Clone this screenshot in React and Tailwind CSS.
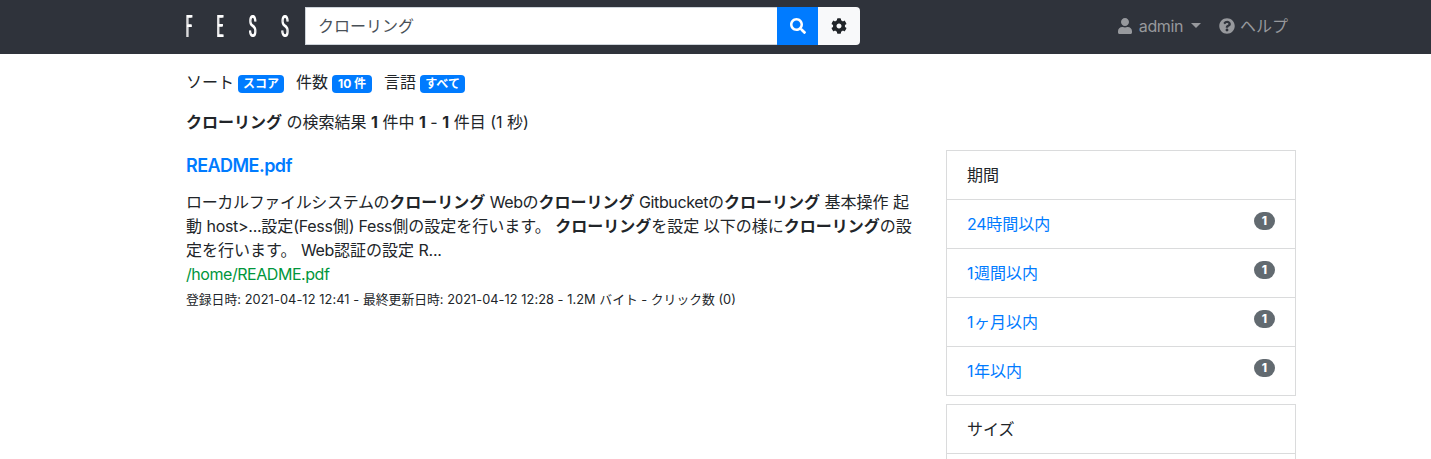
import { FaSearch, FaCog, FaUser, FaQuestionCircle } from "react-icons/fa";

function L({ children, className = "tracking-[-0.3px]" }) {
  return <span className={className}>{children}</span>;
}

// The sideways drop shadow thickens the upright strokes of the narrow wordmark.
function Logo() {
  return (
    <svg className="h-[52px] w-[119px] shrink-0 overflow-visible drop-shadow-[1px_0_0_#fff]" viewBox="0 0 119 52" fill="#fff" fontFamily="Roboto, sans-serif" fontSize="31" fontWeight="400">
      <text transform="translate(-0.6 37) scale(.36 1)">F</text>
      <text transform="translate(30.2 37) scale(.38 1)">E</text>
      <text transform="translate(62.5 37) scale(.4 1)">S</text>
      <text transform="translate(94.8 37) scale(.4 1)">S</text>
    </svg>
  );
}

function Header() {
  return (
    <header className="h-[54px] bg-[#2f333b]">
      <div className="ml-[186px] flex h-[52px] w-[1110px] items-center">
        <Logo />
        <div className="flex h-[38px]">
          <div className="flex w-[472px] items-center border border-r-0 border-[#ced4da] bg-white pl-3 text-[#495057]">
            クローリング
          </div>
          <button className="flex w-[41px] items-center justify-center bg-[#007bff] text-white">
            <FaSearch size={16} />
          </button>
          <button className="flex w-[42px] items-center justify-center rounded-r bg-[#f8f9fa] text-[#212529]">
            <FaCog size={16} />
          </button>
        </div>
        <nav className="ml-auto flex items-center gap-[18px] pr-2 text-[#97999d]">
          <a className="flex items-center">
            <FaUser size={16} className="mr-[6px]" />
            <L className="tracking-[-0.4px]">admin</L>
            <span className="mb-[2px] ml-[8px] border-x-[5px] border-t-[5px] border-x-transparent border-t-[#97999d]" />
          </a>
          <a className="flex items-center gap-[5px]">
            <FaQuestionCircle size={16} />
            <span>ヘルプ</span>
          </a>
        </nav>
      </div>
    </header>
  );
}

function Option({ label, value, width }) {
  return (
    <div className="flex items-center">
      <span>{label}</span>
      <span className={`${width} ml-1 mt-[3px] flex h-[18px] items-center justify-center rounded bg-[#007bff] text-[12px] font-bold leading-none text-white`}>
        {value}
      </span>
    </div>
  );
}

function Result() {
  return (
    <article className="mt-[19px] w-[730px] whitespace-nowrap">
      <h3 className="text-[18px] font-semibold leading-[26px] text-[#007bff]">
        <L className="tracking-[-0.55px]">README.pdf</L>
      </h3>
      <div className="mt-[11px]">
        <p><span className="tracking-[-0.33px]">ローカルファイルシステムの</span><b>クローリング</b> <L className="tracking-[-0.45px]">Web</L>の<b>クローリング</b> <L className="tracking-[-0.38px]">Gitbucket</L>の<b>クローリング</b> 基本操作 起</p>
        <p>動 <L>host&gt;...</L>設定<L>(Fess</L>側<L>) Fess</L>側の設定を行います。 <b>クローリング</b>を設定 以下の様に<b>クローリング</b>の設</p>
        <p>定を行います。 <L>Web</L>認証の設定 <L>R...</L></p>
      </div>
      <p className="text-[#00963c]"><L className="tracking-[-0.45px]">/home/README.pdf</L></p>
      <p className="mt-[2px] text-[12.8px]">
        登録日時<L className="tracking-[0.09px]">: 2021-04-12 12:41 - </L>最終更新日時<L className="tracking-[0.05px]">: 2021-04-12 12:28 - 1.2M </L>バイト - クリック数 (0)
      </p>
    </article>
  );
}

const periods = [
  ["24", "時間以内", "tracking-[-0.3px]"],
  ["1", "週間以内", "tracking-[0.6px]"],
  ["1", "ヶ月以内", "tracking-[0.6px]"],
  ["1", "年以内", "tracking-[0.6px]"],
];

function Sidebar() {
  return (
    <aside className="mt-[16px] w-[350px]">
      <ul className="divide-y divide-[#dadbdc] border border-[#dadbdc]">
        <li className="h-[49px] px-5 py-3">期間</li>
        {periods.map(([n, unit, tracking]) => (
          <li key={unit} className="flex h-[49px] items-start justify-between px-5 py-3 text-[#007bff] last:h-12">
            <span><L className={tracking}>{n}</L>{unit}</span>
            <span className="flex h-[18px] w-[21px] items-center justify-center rounded-full bg-[#626a70] text-[12px] font-extrabold leading-none text-white">1</span>
          </li>
        ))}
      </ul>
      <ul className="mt-2 divide-y divide-[#dadbdc] border border-[#dadbdc]">
        <li className="h-[49px] px-5 py-3">サイズ</li>
        <li className="h-[49px]" />
      </ul>
    </aside>
  );
}

export default function App() {
  return (
    <div className="h-[459px] overflow-hidden bg-white font-['Inter','Noto_Sans_CJK_JP',sans-serif] text-[16px] leading-6 text-[#212529]">
      <Header />
      <main className="ml-[186px] w-[1110px] pt-4">
        <div className="flex h-6 gap-3">
          <Option label="ソート" value="スコア" width="w-[46px]" />
          <Option label="件数" value="10 件" width="w-[40px]" />
          <Option label="言語" value="すべて" width="w-[45px]" />
        </div>
        <p className="mt-4 whitespace-nowrap">
          <b>クローリング</b> の検索結果 <b>1</b> 件中 <b>1</b> - <b>1</b> 件目 (1 秒)
        </p>
        <div className="flex justify-between">
          <Result />
          <Sidebar />
        </div>
      </main>
    </div>
  );
}
